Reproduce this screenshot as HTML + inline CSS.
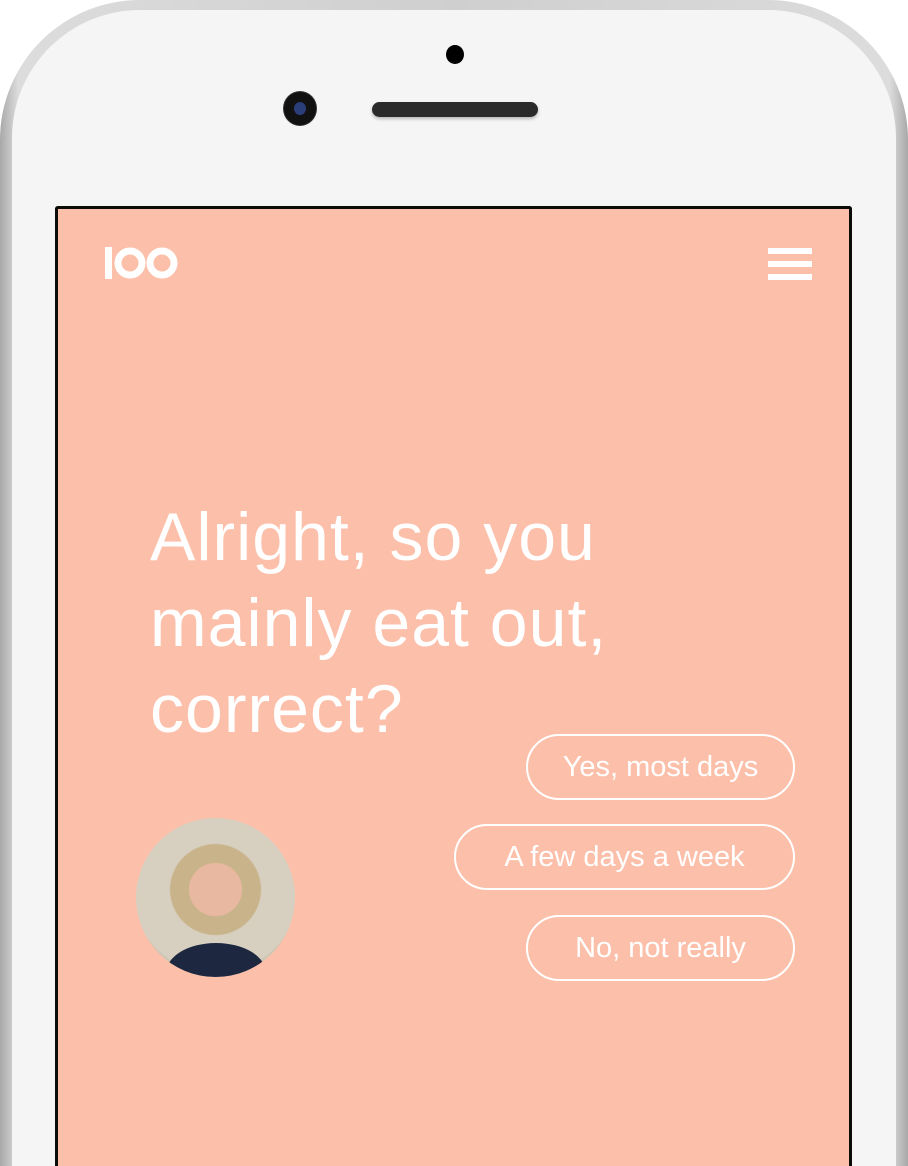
<!DOCTYPE html>
<html><head><style>
html,body{margin:0;width:908px;height:1166px;overflow:hidden;background:#fff;font-family:"Liberation Sans",sans-serif}
.wrap{position:relative;width:908px;height:1166px;overflow:hidden}
.frame{position:absolute;left:0;top:0;width:908px;height:1166px;border-radius:140px 140px 0 0;background:linear-gradient(90deg,#a8a8a8,#dcdcdc 2%,#cfcfcf 50%,#dcdcdc 98%,#a8a8a8)}
.face{position:absolute;left:12px;top:10px;width:884px;height:1156px;border-radius:128px 128px 0 0;background:#f4f5f4}
.screen{position:absolute;left:55px;top:206px;width:791px;height:960px;background:#fcbfaa;border:3px solid #0b0b08;border-bottom:0;border-radius:3px 3px 0 0}
.cam{position:absolute;left:284px;top:92px;width:32px;height:33px;border-radius:50%;background:#111;box-shadow:0 0 0 1px #333}
.cam:after{content:"";position:absolute;left:10px;top:10px;width:12px;height:13px;border-radius:50%;background:#2a3f7a}
.dot{position:absolute;left:446px;top:45px;width:18px;height:19px;border-radius:50%;background:#000}
.spk{position:absolute;left:372px;top:102px;width:166px;height:15px;border-radius:8px;background:#2a2a2a;box-shadow:0 2px 3px rgba(0,0,0,.25)}
h1{position:absolute;left:150px;top:494px;margin:0;color:#fff;font-weight:normal;font-size:68px;line-height:86px;letter-spacing:1px;white-space:nowrap}
.btn{position:absolute;border:2px solid #fff;border-radius:34px;color:#fff;font-size:29px;line-height:62px;box-sizing:border-box;height:66px;text-align:center}
.av{position:absolute;left:136px;top:818px;width:159px;height:159px;border-radius:50%;background:radial-gradient(circle at 50% 45%,#e8b9a0 0 22%,#c9b38a 23% 38%,#d7d0c0 39% 70%,#cfc7b5 71%);overflow:hidden}
.av:after{content:"";position:absolute;left:30px;top:125px;width:100px;height:60px;border-radius:50% 50% 0 0;background:#1e2740}
</style></head><body><div class="wrap">
<div class="frame"></div>
<div class="face"></div>
<div class="dot"></div><div class="cam"></div><div class="spk"></div>
<div class="screen"></div>
<svg style="position:absolute;left:102px;top:246px" width="78" height="34" viewBox="0 0 78 34"><path d="M3 1h7v32H3z" fill="#fff"/><circle cx="28" cy="17" r="12" fill="none" stroke="#fff" stroke-width="7"/><circle cx="60" cy="17" r="12" fill="none" stroke="#fff" stroke-width="7"/></svg>
<svg style="position:absolute;left:768px;top:248px" width="45" height="32"><rect y="0" width="44" height="6" fill="#fff"/><rect y="13" width="44" height="6" fill="#fff"/><rect y="26" width="44" height="6" fill="#fff"/></svg>
<h1>Alright, so you<br>mainly eat out,<br>correct?</h1>
<div class="btn" style="top:734px;left:526px;width:269px">Yes, most days</div>
<div class="btn" style="top:824px;left:454px;width:341px">A few days a week</div>
<div class="btn" style="top:915px;left:526px;width:269px">No, not really</div>
<div class="av"></div>
</div></body></html>
